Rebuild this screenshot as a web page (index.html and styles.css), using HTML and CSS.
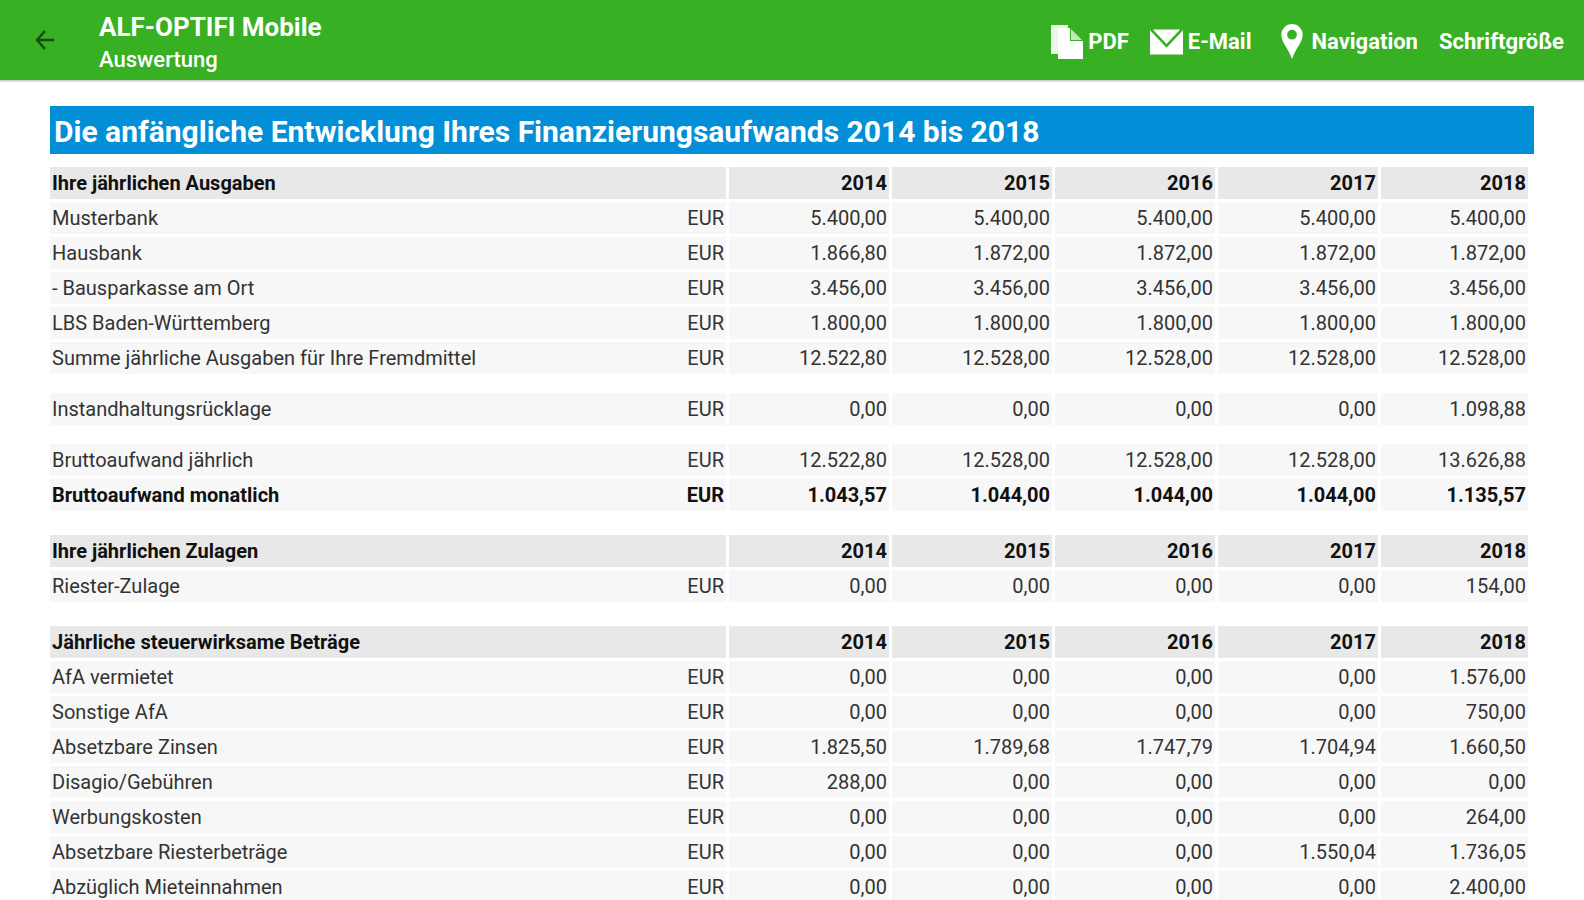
FILE: index.html
```html
<!DOCTYPE html>
<html lang="de">
<head>
    <meta charset="UTF-8">
    <meta name="viewport" content="width=device-width, initial-scale=1.0">
    <title>ALF-OPTIFI Mobile - Auswertung</title>
    <link rel="stylesheet" href="styles.css">
</head>
<body>
    <header class="appbar">
        <button type="button" class="back" aria-label="Zurück">
            <svg width="20" height="20" viewBox="0 0 20 20"><path d="M19 10H2M10 1L2 10l8 9" fill="none" stroke="currentColor" stroke-width="2.4"/></svg>
        </button>
        <div class="titles">
            <h1>ALF-OPTIFI Mobile</h1>
            <p>Auswertung</p>
        </div>
        <nav class="actions">
            <button type="button" class="pdf">
                <svg width="33" height="35" viewBox="0 0 33 35"><path d="M1 1h17v3H8v26H1z" opacity=".9"/><path d="M8 4h12v13h13v18H8z"/><path d="M21 5l11 11H21z" opacity=".7"/></svg>
                PDF
            </button>
            <button type="button" class="mail">
                <svg width="33" height="26" viewBox="0 0 34 26"><path d="M3 0h28L17 15z"/><path d="M0 1l17 18L34 1v25H0z"/></svg>
                E-Mail
            </button>
            <button type="button" class="navigation">
                <svg width="22" height="35" viewBox="1 0 22 36"><path fill-rule="evenodd" d="M12 0a11 11 0 0 0-11 11c0 8 7 13 11 25 4-12 11-17 11-25A11 11 0 0 0 12 0zm0 6a5 5 0 1 1 0 10 5 5 0 0 1 0-10z"/></svg>
                Navigation
            </button>
            <button type="button">Schriftgröße</button>
        </nav>
    </header>

    <main class="report">
        <h2>Die anfängliche Entwicklung Ihres Finanzierungsaufwands 2014 bis 2018</h2>
        <table>
            <colgroup>
                <col>
                <col class="unit">
                <col class="year">
                <col class="year">
                <col class="year">
                <col class="year">
                <col class="last">
            </colgroup>
            <tbody>
                <tr class="head"><th colspan="2">Ihre jährlichen Ausgaben</th><th>2014</th><th>2015</th><th>2016</th><th>2017</th><th>2018</th></tr>
                <tr><td>Musterbank</td><td>EUR</td><td>5.400,00</td><td>5.400,00</td><td>5.400,00</td><td>5.400,00</td><td>5.400,00</td></tr>
                <tr><td>Hausbank</td><td>EUR</td><td>1.866,80</td><td>1.872,00</td><td>1.872,00</td><td>1.872,00</td><td>1.872,00</td></tr>
                <tr><td>- Bausparkasse am Ort</td><td>EUR</td><td>3.456,00</td><td>3.456,00</td><td>3.456,00</td><td>3.456,00</td><td>3.456,00</td></tr>
                <tr><td>LBS Baden-Württemberg</td><td>EUR</td><td>1.800,00</td><td>1.800,00</td><td>1.800,00</td><td>1.800,00</td><td>1.800,00</td></tr>
                <tr><td>Summe jährliche Ausgaben für Ihre Fremdmittel</td><td>EUR</td><td>12.522,80</td><td>12.528,00</td><td>12.528,00</td><td>12.528,00</td><td>12.528,00</td></tr>
                <tr class="gap"><td colspan="7"></td></tr>
                <tr><td>Instandhaltungsrücklage</td><td>EUR</td><td>0,00</td><td>0,00</td><td>0,00</td><td>0,00</td><td>1.098,88</td></tr>
                <tr class="gap"><td colspan="7"></td></tr>
                <tr><td>Bruttoaufwand jährlich</td><td>EUR</td><td>12.522,80</td><td>12.528,00</td><td>12.528,00</td><td>12.528,00</td><td>13.626,88</td></tr>
                <tr class="total"><td>Bruttoaufwand monatlich</td><td>EUR</td><td>1.043,57</td><td>1.044,00</td><td>1.044,00</td><td>1.044,00</td><td>1.135,57</td></tr>
                <tr class="gap section"><td colspan="7"></td></tr>
            </tbody>
            <tbody>
                <tr class="head"><th colspan="2">Ihre jährlichen Zulagen</th><th>2014</th><th>2015</th><th>2016</th><th>2017</th><th>2018</th></tr>
                <tr><td>Riester-Zulage</td><td>EUR</td><td>0,00</td><td>0,00</td><td>0,00</td><td>0,00</td><td>154,00</td></tr>
                <tr class="gap section"><td colspan="7"></td></tr>
            </tbody>
            <tbody>
                <tr class="head"><th colspan="2">Jährliche steuerwirksame Beträge</th><th>2014</th><th>2015</th><th>2016</th><th>2017</th><th>2018</th></tr>
                <tr><td>AfA vermietet</td><td>EUR</td><td>0,00</td><td>0,00</td><td>0,00</td><td>0,00</td><td>1.576,00</td></tr>
                <tr><td>Sonstige AfA</td><td>EUR</td><td>0,00</td><td>0,00</td><td>0,00</td><td>0,00</td><td>750,00</td></tr>
                <tr><td>Absetzbare Zinsen</td><td>EUR</td><td>1.825,50</td><td>1.789,68</td><td>1.747,79</td><td>1.704,94</td><td>1.660,50</td></tr>
                <tr><td>Disagio/Gebühren</td><td>EUR</td><td>288,00</td><td>0,00</td><td>0,00</td><td>0,00</td><td>0,00</td></tr>
                <tr><td>Werbungskosten</td><td>EUR</td><td>0,00</td><td>0,00</td><td>0,00</td><td>0,00</td><td>264,00</td></tr>
                <tr><td>Absetzbare Riesterbeträge</td><td>EUR</td><td>0,00</td><td>0,00</td><td>0,00</td><td>1.550,04</td><td>1.736,05</td></tr>
                <tr><td>Abzüglich Mieteinnahmen</td><td>EUR</td><td>0,00</td><td>0,00</td><td>0,00</td><td>0,00</td><td>2.400,00</td></tr>
            </tbody>
        </table>
    </main>
</body>
</html>
```
FILE: styles.css
```css
* {
    box-sizing: border-box;
}
body {
    margin: 0;
    height: 100vh;
    display: flex;
    flex-direction: column;
    background: #fff;
    font-family: Roboto, Arial, sans-serif;
}
.appbar {
    flex: none;
    display: flex;
    align-items: center;
    height: 80px;
    padding: 0 20px 0 35px;
    background: #37b024;
    color: #fff;
    box-shadow: 0 1px 2px rgba(0, 0, 0, 0.3);
    z-index: 1;
}
.appbar button {
    display: flex;
    align-items: center;
    padding: 0;
    border: none;
    background: none;
    color: inherit;
    font: 700 22px/28px Roboto, Arial, sans-serif;
    cursor: pointer;
}
.appbar svg {
    fill: currentColor;
}
.appbar .back {
    color: #174d10;
}
.titles {
    flex: 1;
    margin-left: 44px;
    padding-top: 6px;
}
.titles h1 {
    margin: 0;
    font-size: 26px;
    line-height: 34px;
    font-weight: 700;
}
.titles p {
    margin: 0;
    font-size: 22px;
    line-height: 32px;
    font-weight: 500;
}
.actions {
    display: flex;
    gap: 21px;
    padding-top: 3px;
}
.actions .pdf,
.actions .mail {
    gap: 5px;
}
.actions .navigation {
    gap: 9px;
    margin-left: 8px;
}
.report {
    flex: 1;
    min-height: 0;
    overflow-y: auto;
    scrollbar-width: none;
    padding: 26px 50px 0;
}
.report h2 {
    margin: 0 0 13px;
    padding: 6px 4px 2px;
    background: #028fd7;
    color: #fff;
    font-size: 30px;
    line-height: 40px;
    font-weight: 700;
}
table {
    width: calc(100% - 6px);
    table-layout: fixed;
    border-spacing: 0;
    color: #333;
    font-size: 20px;
    line-height: 32px;
}
col.unit {
    width: 60px;
}
col.year {
    width: 163px;
}
col.last {
    width: 147px;
}
th, td {
    padding: 0 2px;
    border: 0 solid #fff;
    border-width: 0 3px 3px 0;
    background: #f7f7f7;
    text-align: right;
    white-space: nowrap;
}
th:first-child, td:first-child {
    text-align: left;
}
td:first-child {
    border-right: none;
}
th:last-child, td:last-child {
    border-right: none;
}
.head th {
    background: #e8e8e8;
    color: #111;
}
.total td {
    color: #111;
    font-weight: 700;
}
.gap td {
    height: 16px;
    padding: 0;
    border: none;
    background: none;
}
.section td {
    height: 21px;
}
```
